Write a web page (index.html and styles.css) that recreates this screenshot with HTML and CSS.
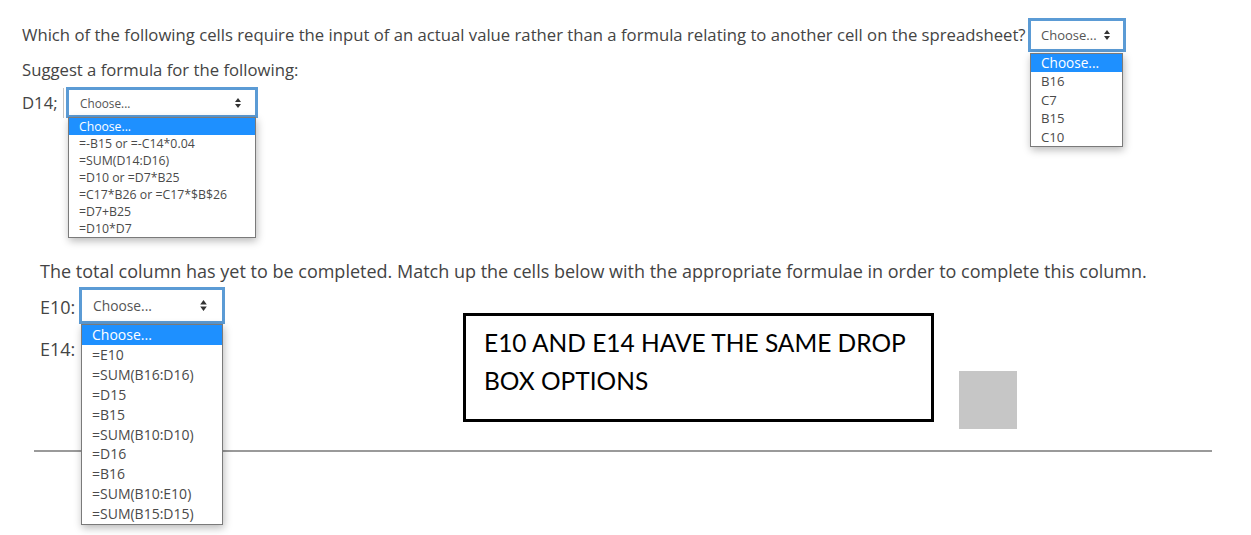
FILE: index.html
```html
<!DOCTYPE html>
<html lang="en">
<head>
<meta charset="utf-8">
<title>Spreadsheet question</title>
<link rel="stylesheet" href="styles.css">
</head>
<body>
<main class="page">
  <div class="q1">
    <span class="txt">Which of the following cells require the input of an actual value rather than a formula relating to another cell on the spreadsheet?</span>
    <div class="sel sel-a">
      <div class="sel-box"><span>Choose...</span><svg class="arr" viewBox="0 0 6 10" width="6" height="10"><path d="M3 0 L6 4 L0 4 Z M0 6 L6 6 L3 10 Z"/></svg></div>
      <ul class="menu">
        <li class="on">Choose...</li>
        <li>B16</li>
        <li>C7</li>
        <li>B15</li>
        <li>C10</li>
      </ul>
    </div>
  </div>
  <p class="txt q2">Suggest a formula for the following:</p>
  <div class="q3">
    <span class="txt lbl-d">D14;</span>
    <div class="sel sel-b">
      <div class="sel-box"><span>Choose...</span><svg class="arr" viewBox="0 0 6 10" width="6" height="10"><path d="M3 0 L6 4 L0 4 Z M0 6 L6 6 L3 10 Z"/></svg></div>
      <ul class="menu">
        <li class="on">Choose...</li>
        <li>=-B15 or =-C14*0.04</li>
        <li>=SUM(D14:D16)</li>
        <li>=D10 or =D7*B25</li>
        <li>=C17*B26 or =C17*$B$26</li>
        <li>=D7+B25</li>
        <li>=D10*D7</li>
      </ul>
    </div>
  </div>
  <section class="part2">
    <p class="txt2">The total column has yet to be completed. Match up the cells below with the appropriate formulae in order to complete this column.</p>
    <div class="match">
      <div class="cells">
        <div class="cell-row">
          <span class="txt2 lbl-e">E10:</span>
          <div class="sel sel-c">
            <div class="sel-box"><span>Choose...</span><svg class="arr" viewBox="0 0 6 10" width="7" height="11"><path d="M3 0 L6 4 L0 4 Z M0 6 L6 6 L3 10 Z"/></svg></div>
            <ul class="menu">
              <li class="on">Choose...</li>
              <li>=E10</li>
              <li>=SUM(B16:D16)</li>
              <li>=D15</li>
              <li>=B15</li>
              <li>=SUM(B10:D10)</li>
              <li>=D16</li>
              <li>=B16</li>
              <li>=SUM(B10:E10)</li>
              <li>=SUM(B15:D15)</li>
            </ul>
          </div>
        </div>
        <div class="cell-row2"><span class="txt2 lbl-e">E14:</span></div>
      </div>
      <div class="note">E10 AND E14 HAVE THE SAME DROP<br>BOX OPTIONS</div>
      <div class="grey"></div>
    </div>
  </section>
  <div class="rule"></div>
</main>
</body>
</html>
```

FILE: styles.css
```css
* { box-sizing: border-box; }
html, body { margin: 0; padding: 0; background: #fff; }
body {
  font-family: "Open Sans", "Noto Sans", sans-serif;
  color: #444;
  width: 1251px;
  height: 535px;
  overflow: hidden;
}
.page { padding-left: 22px; }
.txt { font-size: 16.7px; line-height: 20px; white-space: nowrap; }
.txt2 { font-size: 18px; line-height: 22px; white-space: nowrap; }

.q1 {
  margin-top: 18px;
  height: 34px;
  display: flex;
  align-items: center;
}
.q1 .txt { width: 1006px; flex: none; }
.q2 { margin: 8px 0 0; }
.q3 {
  margin-top: 7px;
  height: 31px;
  display: flex;
  align-items: center;
}
.lbl-d { width: 44px; flex: none; }

.sel { position: relative; flex: none; }
.sel-box {
  height: 100%;
  border: 3px solid #5b9bd5;
  background: #fff;
  display: flex;
  align-items: center;
  justify-content: space-between;
  color: #555;
}
.arr { fill: #333; display: block; }
.menu {
  position: absolute;
  margin: 0;
  padding: 0;
  list-style: none;
  background: #fff;
  border: 1px solid #7a7a7a;
  box-shadow: 1px 3px 8px rgba(0, 0, 0, 0.28);
  z-index: 5;
  color: #4a4a4a;
}
.menu li { white-space: nowrap; }
.menu li.on { background: #1e90ff; color: #fff; }

.sel-a { width: 98px; height: 34px; }
.sel-a .sel-box { padding: 0 13px 0 10px; font-size: 13px; }
.sel-a .menu { left: 2px; top: 35px; width: 93px; font-size: 13.2px; }
.sel-a .menu li { line-height: 18.4px; padding-left: 10px; }
.sel-a .menu li.on { font-size: 13.6px; }

.sel-b { width: 192px; height: 31px; }
.sel-b::before {
  content: "";
  position: absolute;
  left: -3px;
  top: 1px;
  bottom: 0;
  width: 1px;
  background: #c4c4c4;
}
.sel-b .sel-box { padding: 0 14px 0 11px; font-size: 11.8px; }
.sel-b .menu { left: 2px; top: 30px; width: 188px; font-size: 12.3px; }
.sel-b .menu li { line-height: 17px; padding-left: 10px; }
.sel-b .menu li.on { font-size: 12.2px; }

.part2 { padding-left: 18px; }
.part2 .txt2 { margin: 0; }
.part2 > .txt2 { margin-top: 142px; }

.match { display: flex; align-items: flex-start; margin-top: 5px; }
.cells { width: 185px; flex: none; }
.cell-row { display: flex; align-items: center; height: 37px; }
.lbl-e { width: 39px; flex: none; padding-top: 3px; }
.cell-row2 { margin-top: 14px; }

.sel-c { width: 146px; height: 37px; }
.sel-c .sel-box { padding: 0 15px 0 11px; font-size: 13.8px; }
.sel-c .menu { left: 2px; top: 37px; width: 142px; font-size: 14px; }
.sel-c .menu li { line-height: 19.9px; padding-left: 10px; }
.sel-c .menu li.on { font-size: 14px; }

.note {
  flex: none;
  margin-left: 238px;
  margin-top: 26px;
  width: 471px;
  height: 109px;
  border: 3px solid #000;
  padding: 8px 0 0 18px;
  font-family: "Lato", "Liberation Sans", sans-serif;
  font-size: 24.5px;
  line-height: 38px;
  color: #000;
}
.grey {
  flex: none;
  margin-left: 25px;
  margin-top: 84px;
  width: 58px;
  height: 58px;
  background: #c6c6c6;
}
.rule {
  margin: 21px 0 0 12px;
  width: 1178px;
  height: 2px;
  background: #9a9a9a;
}
```
